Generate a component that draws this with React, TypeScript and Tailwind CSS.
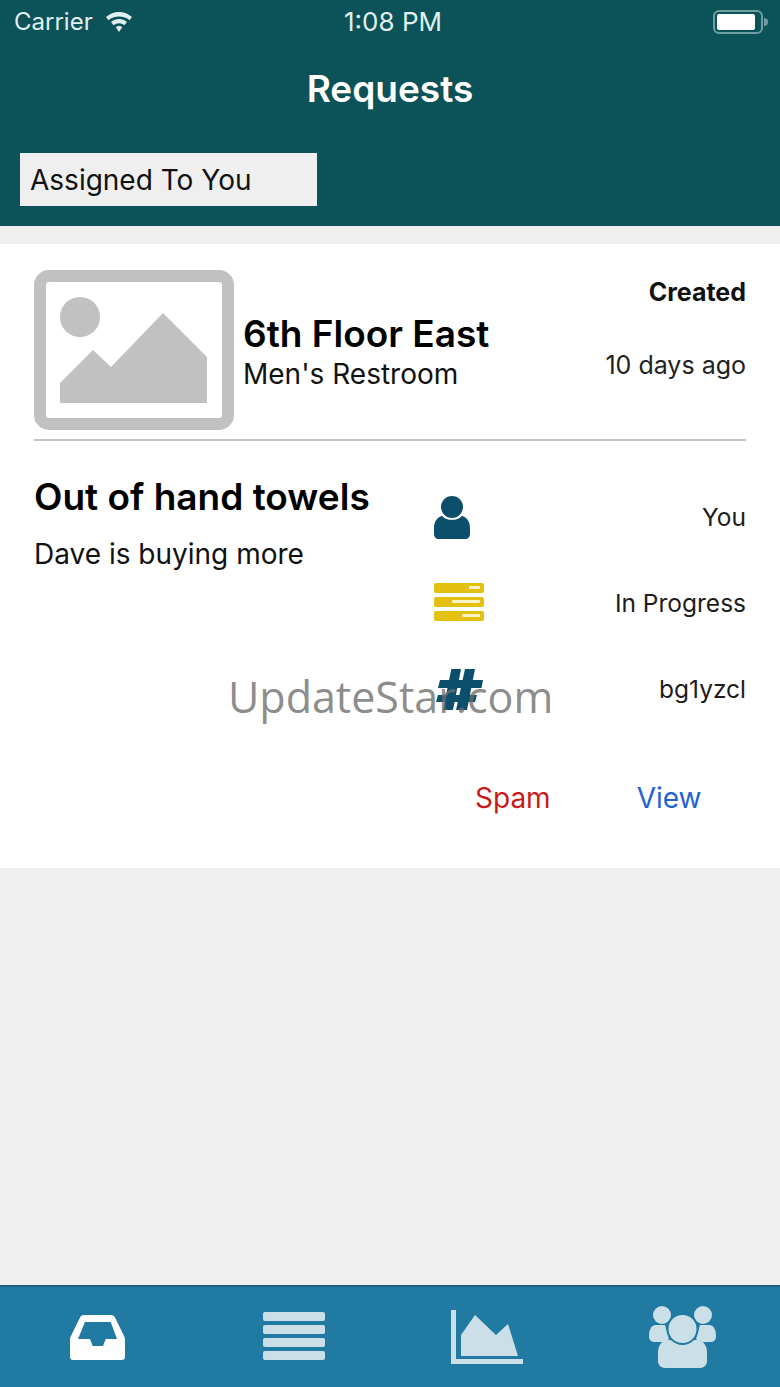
const font = "font-['Inter','Liberation_Sans',sans-serif]";

function StatusBar() {
  return (
    <div className="flex h-[42px] items-center justify-between pl-[14px] pr-[12px] pt-[2px] text-[#e0f0f0]">
      <div className="flex w-[140px] items-center gap-[12px]">
        <span className="text-[24px] leading-none">Carrier</span>
        <svg width="28" height="22" viewBox="0 0 28 22" fill="currentColor">
          <path d="M14 1C9 1 4.600 2.900 1 6l2.400 3.200C6.300 6.800 10 5.500 14 5.500s7.700 1.300 10.600 3.700L27 6c-3.600-3.100-8-5-13-5z" />
          <path d="M14 8c-3 0-5.800 1.100-8 3l2.600 3.200c1.500-1.300 3.400-2 5.400-2s3.900.7 5.400 2L22 11c-2.200-1.900-5-3-8-3z" />
          <path d="M14 15c-1.300 0-2.400.5-3.300 1.200L14 21l3.300-4.800C16.400 15.500 15.300 15 14 15z" />
        </svg>
      </div>
      <span className="ml-[4px] text-[26px] leading-none">1:08 PM</span>
      <div className="flex w-[140px] items-center justify-end">
        <div className="h-[24px] w-[50px] rounded-[6px] border-2 border-[#6f9ea2] p-[2px]">
          <div className="h-full w-[38px] rounded-[2px] bg-white" />
        </div>
        <div className="ml-[1px] h-[8px] w-[4px] rounded-r-full bg-[#6f9ea2]" />
      </div>
    </div>
  );
}

function PlaceholderImage() {
  return (
    <svg width="201" height="161" viewBox="0 0 201 161" className="shrink-0">
      <rect x="6" y="6" width="188" height="148" rx="9" fill="#fff" stroke="#c1c1c1" strokeWidth="12" />
      <circle cx="46" cy="47" r="20" fill="#c1c1c1" />
      <path d="M26 133v-20l33-33 18 17 52-54 44 44v46z" fill="#c1c1c1" />
    </svg>
  );
}

function UserIcon() {
  return (
    <svg width="36" height="44" viewBox="0 0 36 44" fill="#0c4f6c">
      <circle cx="18" cy="11" r="11" />
      <path d="M8 20c2.500 3 6 3.800 10 3.800S25.500 23 28 20c5 1 8 6 8 12v6c0 3-2 5-5 5H5c-3 0-5-2-5-5v-6c0-6 3-11 8-12z" />
    </svg>
  );
}

function StatusIcon() {
  const bars = ["w-[11px]", "w-[28px]", "w-[18px]"];
  return (
    <div className="mb-[5px] flex w-[50px] flex-col gap-[4px]">
      {bars.map((w) => (
        <div key={w} className="flex h-[10px] items-center justify-end rounded-[2px] bg-[#e4c010] pr-[4px]">
          <div className={`h-[3px] rounded-[1px] bg-[#fbf3c8] ${w}`} />
        </div>
      ))}
    </div>
  );
}

function HashIcon() {
  return (
    <svg width="48" height="41" viewBox="-1 0 48 41" fill="#0c4f6c" className="mb-[2px] ml-[2px]">
      <path d="M14.300 0H24L16 41H6z" />
      <path d="M28 0h10L30 41H19z" />
      <path d="M3 11h43l-1.500 8H1z" />
      <path d="M1 26h39l-2 7H-1z" />
    </svg>
  );
}

function InfoRow({ icon, text }: { icon: React.ReactNode; text: string }) {
  return (
    <div className="flex h-[86px] items-center justify-between">
      <div className="flex w-[60px] items-center">{icon}</div>
      <span className="mb-[2px] text-[24.5px] leading-none text-[#1c1c1c]">{text}</span>
    </div>
  );
}

function TabBar() {
  return (
    <div className="grid h-[102px] grid-cols-4 place-items-center border-t-2 border-[#1a5f80] bg-[#217aa1]">
      <svg width="55" height="45" viewBox="0 0 55 45" fill="#fff">
        <path fillRule="evenodd" d="M14 0h27c2 0 3.300 1 4 2.500l9.500 19.500c.4.900.5 1.500.5 2.500V42c0 1.700-1.300 3-3 3H3c-1.700 0-3-1.300-3-3V24.500c0-1 .1-1.600.5-2.500L10 2.500C10.700 1 12 0 14 0zm1 7L8 24h12l2.700 7h10.300l2.700-7H47L40.700 7z" />
      </svg>
      <div className="mb-[3px] ml-[3px] flex w-[62px] flex-col gap-[4px]">
        {[0, 1, 2, 3].map((i) => (
          <div key={i} className="h-[9px] rounded-[2px] bg-[#cbdfe9]" />
        ))}
      </div>
      <svg width="72" height="54" viewBox="0 0 72 54" fill="#cbdfe9" className="mr-[1px]">
        <path d="M0 0h5v49h67v5H0z" />
        <path d="M10 25 24 5l21 20 12-11 10 32H10z" />
      </svg>
      <svg width="67" height="62" viewBox="0 0 67 62" fill="#cbdfe9">
        <circle cx="13" cy="9" r="9" />
        <circle cx="54" cy="9" r="9" />
        <path d="M6 19h10l4 14-3 3H6c-4 0-6-2-6-6 0-6 2-10 6-11z" />
        <path d="M61 19H51l-4 14 3 3h11c4 0 6-2 6-6 0-6-2-10-6-11z" />
        <path d="M16 34h35c5 3 7 7 7 13v8c0 4-3 7-7 7H16c-4 0-7-3-7-7v-8c0-6 2-10 7-13z" />
        <circle cx="33.500" cy="23" r="15" stroke="#217aa1" strokeWidth="2" />
      </svg>
    </div>
  );
}

export default function App() {
  return (
    <div className={`relative flex h-[1387px] w-[780px] flex-col overflow-hidden bg-[#efefef] ${font}`}>
      {/* Header */}
      <header className="h-[226px] bg-[#0b5259]">
        <StatusBar />
        <h1 className="mt-[25px] text-center text-[37px] font-semibold leading-[44px] text-white">Requests</h1>
        <div className="ml-[20px] mt-[42px] flex h-[53px] w-[297px] items-center bg-[#efefef] pl-[10px] text-[28px] text-[#111]">
          Assigned To You
        </div>
      </header>

      {/* Request card */}
      <main className="mt-[18px] flex h-[624px] flex-col bg-white pl-[34px] pr-[34px] pt-[26px]">
        <div className="flex items-start border-b-2 border-[#c4c4c4] pb-[8px]">
          <PlaceholderImage />
          <div className="ml-[8px] mt-[42px] flex-1">
            <div className="text-[37px] font-semibold leading-[44px] text-black">6th Floor East</div>
            <div className="text-[28px] leading-[36px] text-[#111]">Men's Restroom</div>
          </div>
          <div className="mt-[8px] text-right">
            <div className="text-[25px] font-bold leading-[28px] text-[#111]">Created</div>
            <div className="mt-[44px] text-[25px] leading-[30px] text-[#222]">10 days ago</div>
          </div>
        </div>

        <div className="flex">
          <div className="w-[400px] pt-[34px]">
            <div className="text-[37px] font-semibold leading-[44px] text-black">Out of hand towels</div>
            <div className="mt-[18px] text-[28px] leading-[34px] text-[#111]">Dave is buying more</div>
          </div>
          <div className="flex-1 pt-[34px]">
            <InfoRow icon={<UserIcon />} text="You" />
            <InfoRow icon={<StatusIcon />} text="In Progress" />
            <InfoRow icon={<HashIcon />} text="bg1yzcl" />
            <div className="mt-[47px] flex text-[28px] leading-[36px]">
              <span className="ml-[41px] text-[#c91a1a]">Spam</span>
              <span className="ml-[86px] text-[#1f62d0]">View</span>
            </div>
          </div>
        </div>
      </main>

      <div className="flex-1" />
      <TabBar />

      {/* Watermark */}
      <div className="absolute left-[228px] top-[667px] font-['Open_Sans',sans-serif] text-[43px] leading-[60px] text-[#6e6e6e]/80">
        UpdateStar.com
      </div>
    </div>
  );
}
